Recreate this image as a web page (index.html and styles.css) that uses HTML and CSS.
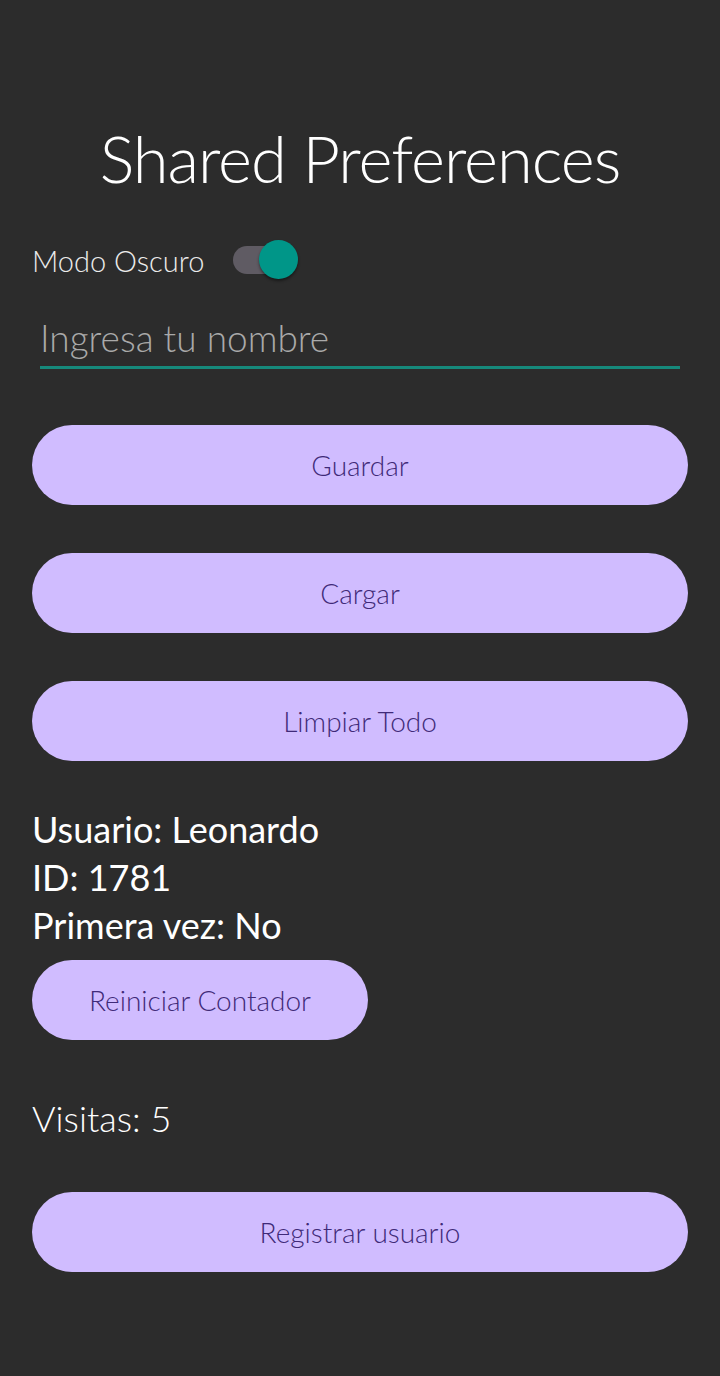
FILE: index.html
```html
<!DOCTYPE html>
<html lang="es">
<head>
<meta charset="utf-8">
<link rel="stylesheet" href="styles.css">
</head>
<body>
<main class="screen">
  <h1 class="title">Shared Preferences</h1>
  <div class="mode-row">
    <span class="mode-label">Modo Oscuro</span>
    <span class="switch"><span class="track"></span><span class="thumb"></span></span>
  </div>
  <div class="field">
    <span class="placeholder">Ingresa tu nombre</span>
  </div>
  <div class="btn-stack">
    <button class="btn">Guardar</button>
    <button class="btn">Cargar</button>
    <button class="btn">Limpiar Todo</button>
  </div>
  <div class="info">
    <p>Usuario: Leonardo</p>
    <p>ID: 1781</p>
    <p>Primera vez: No</p>
  </div>
  <button class="btn btn-small">Reiniciar Contador</button>
  <p class="visits">Visitas: 5</p>
  <button class="btn btn-last">Registrar usuario</button>
</main>
</body>
</html>
```
FILE: styles.css
```css
html, body {
  margin: 0;
  padding: 0;
  background: #2c2c2c;
}
body {
  width: 720px;
  height: 1376px;
  font-family: "Lato", "Open Sans", sans-serif;
  color: #ffffff;
}
.screen {
  display: flex;
  flex-direction: column;
  padding: 0 32px;
}
.title {
  margin: 116px 0 0;
  height: 84px;
  line-height: 84px;
  text-align: center;
  font-weight: 300;
  font-size: 65px;
  letter-spacing: -1px;
}
.mode-row {
  display: flex;
  align-items: center;
  margin-top: 40px;
  height: 40px;
}
.mode-label {
  font-size: 29px;
  font-weight: 300;
  color: #ececec;
}
.switch {
  position: relative;
  width: 66px;
  height: 40px;
  margin-left: 29px;
}
.track {
  position: absolute;
  left: 0;
  top: 6px;
  width: 56px;
  height: 28px;
  border-radius: 14px;
  background: #5f5b63;
}
.thumb {
  position: absolute;
  left: 26px;
  top: 0;
  width: 39px;
  height: 39px;
  border-radius: 50%;
  background: #009688;
  box-shadow: 0 2px 3px rgba(0,0,0,0.45);
}
.field {
  margin: 36px 8px 0;
  height: 50px;
  border-bottom: 3px solid #16897b;
  display: flex;
  align-items: center;
}
.placeholder {
  font-size: 37px;
  font-weight: 300;
  color: #a9a9a9;
  margin-top: -8px;
}
.btn-stack {
  display: flex;
  flex-direction: column;
  gap: 48px;
  margin-top: 56px;
}
.btn {
  height: 80px;
  border: none;
  border-radius: 40px;
  background: #d0bcff;
  color: #3f2a78;
  font-family: "Lato", "Open Sans", sans-serif;
  font-weight: 300;
  font-size: 28px;
  padding: 0;
  width: 100%;
}
.info {
  margin-top: 44px;
}
.info p {
  margin: 0;
  font-size: 36px;
  line-height: 48px;
  font-weight: 400;
}
.btn-small {
  width: 336px;
  margin-top: 11px;
}
.visits {
  margin: 56px 0 0;
  font-size: 36px;
  font-weight: 300;
  line-height: 44px;
}
.btn-last {
  margin-top: 52px;
}
```
